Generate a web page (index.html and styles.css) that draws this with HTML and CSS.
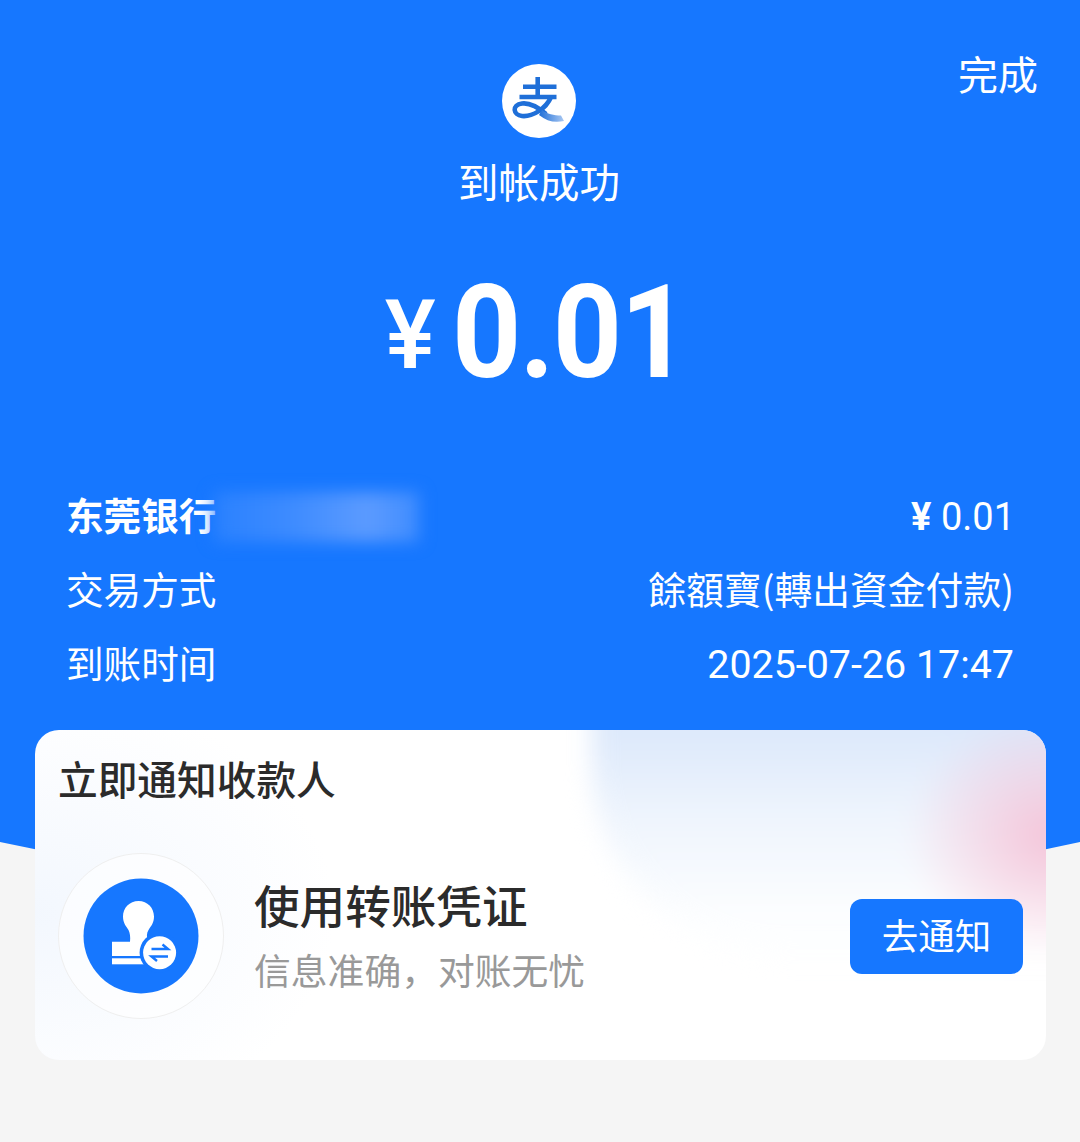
FILE: index.html
```html
<!DOCTYPE html>
<html>
    <head>
        <meta charset="utf-8">
        <meta name="viewport" content="width=device-width, initial-scale=1">
        <title>到帐成功</title>
        <link rel="stylesheet" href="styles.css">
    </head>
    <body>
        <div class="top">
            <div class="head">
                <svg class="logo" viewBox="0 0 74 74">
                    <defs>
                        <linearGradient id="tail" x1="0" y1="0" x2="1" y2="0">
                            <stop offset="0" stop-color="#1f6fd8"></stop>
                            <stop offset="1" stop-color="#a9c8f2"></stop>
                        </linearGradient>
                    </defs>
                    <circle cx="37" cy="37" r="37" fill="#fff"></circle>
                    <g fill="none" stroke="#1f6fd8" stroke-width="4.6">
                        <path d="M21 22.7H54.5"></path>
                        <path d="M17.5 33H54.5"></path>
                        <path d="M35.7 13V33"></path>
                        <path d="M49 33C44 45 30 53 20 52C11 51 9.5 41 20 39.5C28 38.5 37 44 44 50"></path>
                    </g>
                    <path d="M40 46C45 50 52 51.5 59 51.5L62 57C53 59 45 57.5 37 51Z" fill="url(#tail)"></path>
                </svg>
                <a class="done">完成</a>
            </div>
            <div class="status">到帐成功</div>
            <div class="amount"><span class="yen">¥</span><span class="digits">0.01</span></div>
            <div class="rows">
                <div class="row">
                    <span class="name">东莞银行<i class="mask"></i></span>
                    <span class="num num-small"><b class="yen-sm">¥</b> 0.01</span>
                </div>
                <div class="row">
                    <span>交易方式</span>
                    <span class="method">餘額寶(轉出資金付款)</span>
                </div>
                <div class="row">
                    <span>到账时间</span>
                    <span class="num">2025-07-26 17:47</span>
                </div>
            </div>
        </div>
        <div class="card">
            <h2 class="card-title">立即通知收款人</h2>
            <div class="card-body">
                <svg class="stamp" viewBox="0 0 166 166">
                    <circle cx="83" cy="83" r="82.5" fill="#fff" fill-opacity=".6" stroke="#efefef"></circle>
                    <circle cx="83" cy="83" r="57.5" fill="#1677ff"></circle>
                    <path d="M80.6 48C71.5 48 65 55 65 63.5C65 70 68 73 70.5 77C72 80 72.5 84 72 88.7H54V103H88V88.7H90C88.5 84 88.5 80 90.5 77C93 73 96 70 96 63.5C96 55 89.5 48 80.6 48Z" fill="#fff"></path>
                    <rect x="54" y="105.3" width="34" height="6" fill="#fff"></rect>
                    <circle cx="101.6" cy="99.7" r="20" fill="#1677ff"></circle>
                    <circle cx="101.6" cy="99.7" r="16.5" fill="#fff"></circle>
                    <path d="M93.5 96H110L104.5 91.5M110 103.5H93.5L99 108" fill="none" stroke="#1677ff" stroke-width="2.4"></path>
                </svg>
                <div class="info">
                    <div class="info-title">使用转账凭证</div>
                    <div class="info-sub">信息准确，对账无忧</div>
                </div>
                <button class="notify">去通知</button>
            </div>
        </div>
    </body>
</html>
```

FILE: styles.css
```css
html, body{
    margin: 0;
    height: 1142px;
    overflow: hidden;
    background-color: #f5f5f5;
}
body{
    font-family: "Noto Sans CJK SC", "Noto Sans", sans-serif;
    color: #fff;
}
.top{
    height: 880px;
    padding-top: 64px;
    box-sizing: border-box;
    background-color: #1677ff;
    clip-path: path('M0 0H1080V842Q540 960 0 842Z');
}
.head{
    display: grid;
    grid-template-columns: 1fr 74px 1fr;
    height: 74px;
}
.logo{
    grid-column: 2;
    width: 74px;
    height: 74px;
    margin-left: -1px;
}
.done{
    justify-self: end;
    margin: -16px 42px 0 0;
    font-size: 40px;
    line-height: 50px;
}
.status{
    margin-top: 18px;
    padding-right: 2px;
    font-size: 40.5px;
    line-height: 50px;
    text-align: center;
}
.amount{
    display: flex;
    justify-content: center;
    align-items: center;
    margin-top: 58px;
    padding-right: 6px;
    height: 138px;
    font-family: Roboto, sans-serif;
    font-weight: 700;
    font-size: 130px;
    letter-spacing: -2px;
    line-height: 140px;
}
.digits{
    margin-right: -16px;
    transform: scaleX(.93);
    transform-origin: left center;
}
.yen{
    margin: 4px 16px 0 0;
    font-size: 96px;
    font-weight: 500;
    letter-spacing: 0;
}
.rows{
    margin-top: 78px;
    padding: 0 66px 0 66px;
}
.row{
    display: flex;
    justify-content: space-between;
    font-size: 37.6px;
    line-height: 68px;
    height: 74px;
}
.method{
    font-size: 37.8px;
}
.name{
    position: relative;
    font-weight: 700;
}
.num{
    font-family: Roboto, sans-serif;
    font-size: 39.4px;
    line-height: 74px;
}
.num-small{
    font-size: 38px;
    margin-right: -1px;
}
.yen-sm{
    font-weight: 700;
}
.mask{
    position: absolute;
    left: 148px;
    top: 12px;
    width: 205px;
    height: 50px;
    background: linear-gradient(90deg, #2a81ff, #3f8cff 40%, #5c9bff 75%, #3f8cff);
    filter: blur(8px);
}
.card{
    position: relative;
    height: 330px;
    margin: -150px 34px 0 35px;
    border-radius: 24px;
    overflow: hidden;
    background-color: #fff;
    background-image: radial-gradient(ellipse 300px 220px at 0 55%, rgba(225, 236, 252, .4), rgba(225, 236, 252, 0));
}
.card::before{
    content: "";
    position: absolute;
    left: 557px;
    top: -60px;
    right: -60px;
    height: 285px;
    border-radius: 0 0 0 190px;
    background-image:
        radial-gradient(ellipse 150px 125px at 90% 58%, rgba(245, 190, 212, .9), rgba(245, 190, 212, 0)),
        linear-gradient(180deg, #dde9fb 22%, #eff5fd 52%, #fdfeff 88%);
    filter: blur(12px);
}
.card-title{
    position: relative;
    margin: 0;
    padding: 23px 0 3px 23px;
    font-size: 39.7px;
    line-height: 50px;
    font-weight: 500;
    color: #2b2b2b;
}
.card-body{
    position: relative;
    display: flex;
    align-items: center;
    margin-top: 47px;
    padding: 0 23px;
}
.stamp{
    width: 166px;
    height: 166px;
    flex-shrink: 0;
}
.info{
    flex: 1;
    margin: -4px 0 0 30px;
}
.info-title{
    font-size: 45.6px;
    line-height: 60px;
    font-weight: 500;
    color: #2b2b2b;
}
.info-sub{
    margin-top: 10px;
    font-size: 36.8px;
    line-height: 50px;
    color: #999;
}
.notify{
    width: 173px;
    height: 75px;
    padding: 0 0 4px;
    border: 0;
    border-radius: 12px;
    background-color: #1677ff;
    color: #fff;
    font-family: inherit;
    font-size: 36.5px;
}
```
